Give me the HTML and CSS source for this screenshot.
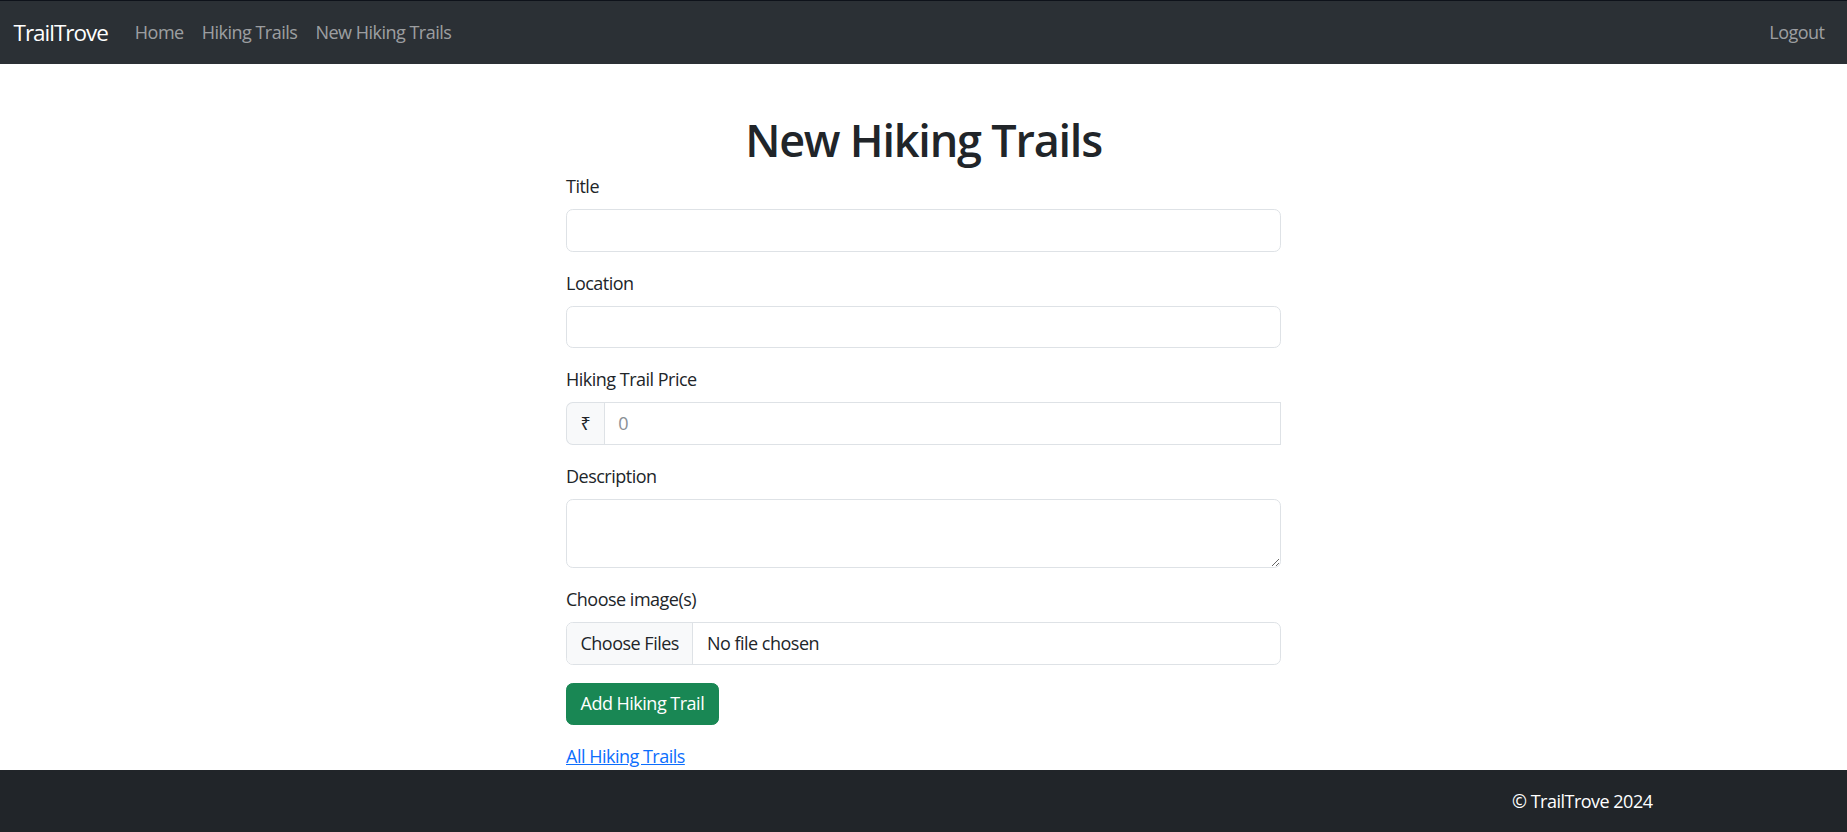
FILE: index.html
```html
<!DOCTYPE html>
<html lang="en">
<head>
  <meta charset="UTF-8">
  <title>TrailTrove</title>
  <link rel="stylesheet" href="styles.css">
</head>
<body>
  <nav class="navbar">
    <a class="brand" href="#">TrailTrove</a>
    <div class="nav-links">
      <a href="#">Home</a>
      <a href="#">Hiking Trails</a>
      <a href="#">New Hiking Trails</a>
    </div>
    <div class="nav-right">
      <a href="#">Logout</a>
    </div>
  </nav>

  <main class="main">
    <h1>New Hiking Trails</h1>
    <div class="form-wrap">
      <form class="trail-form">
        <div class="field">
          <label for="title">Title</label>
          <input type="text" id="title" class="control">
        </div>
        <div class="field">
          <label for="location">Location</label>
          <input type="text" id="location" class="control">
        </div>
        <div class="field">
          <label for="price">Hiking Trail Price</label>
          <div class="input-group">
            <span class="addon">₹</span>
            <input type="text" id="price" class="control" placeholder="0">
          </div>
        </div>
        <div class="field">
          <label for="description">Description</label>
          <textarea id="description" class="control"></textarea>
        </div>
        <div class="field">
          <label for="image">Choose image(s)</label>
          <input type="file" id="image" class="control file" multiple>
        </div>
        <div class="field">
          <button type="button" class="btn-add">Add Hiking Trail</button>
        </div>
      </form>
      <a class="back" href="#">All Hiking Trails</a>
    </div>
  </main>

  <footer class="footer">
    <div class="footer-inner">
      <span>&copy; TrailTrove 2024</span>
    </div>
  </footer>
</body>
</html>
```

FILE: styles.css
```css
html, body {
  margin: 0;
  padding: 0;
}

body {
  font-family: 'Segoe UI', 'Open Sans', sans-serif;
  font-size: 18px;
  line-height: 27px;
  color: #212529;
  background: #fff;
  letter-spacing: -0.028em;
}

a {
  text-decoration: none;
}

.navbar {
  display: flex;
  align-items: center;
  height: 63px;
  border-top: 1px solid #0e121a;
  background: #2b3035;
  padding: 0 13.5px;
}

.brand {
  color: #fff;
  font-size: 22.5px;
  line-height: 34px;
  margin-right: 18px;
  letter-spacing: -0.045em;
}

.nav-links {
  display: flex;
}

.nav-links a,
.nav-right a {
  color: rgba(255, 255, 255, 0.55);
  padding: 9px;
}

.nav-right {
  margin-left: auto;
}

.main {
  display: flex;
  flex-direction: column;
  align-items: center;
}

h1 {
  margin: 49px 0 6px;
  font-size: 45px;
  line-height: 54px;
  font-weight: 600;
  letter-spacing: -0.027em;
}

.form-wrap {
  width: 715px;
}

.field {
  margin-bottom: 18px;
}

label {
  display: block;
  margin-bottom: 9px;
}

.control {
  display: block;
  width: 100%;
  box-sizing: border-box;
  padding: 6.75px 13.5px;
  font: inherit;
  line-height: 27px;
  letter-spacing: inherit;
  color: #212529;
  border: 1px solid #dee2e6;
  border-radius: 6.75px;
  background: #fff;
  outline: none;
}

.control::placeholder {
  color: #8a9096;
}

textarea.control {
  height: 69.5px;
  resize: vertical;
}

.input-group {
  display: flex;
}

.addon {
  padding: 6.75px 13.5px;
  border: 1px solid #dee2e6;
  border-right: none;
  border-radius: 6.75px 0 0 6.75px;
  background: #f8f9fa;
  font-family: 'Noto Sans', sans-serif;
}

.input-group .control {
  border-radius: 0;
}

.file {
  padding: 0;
  overflow: hidden;
}

.file::file-selector-button {
  font: inherit;
  letter-spacing: inherit;
  color: #212529;
  background: #f8f9fa;
  border: none;
  border-right: 1px solid #dee2e6;
  padding: 6.75px 13.5px;
  margin: 0 13.5px 0 0;
  line-height: 27px;
}

.btn-add {
  font: inherit;
  letter-spacing: inherit;
  line-height: 27px;
  color: #fff;
  background: #198754;
  border: 1px solid #198754;
  border-radius: 6.75px;
  padding: 6.75px 13.5px;
}

.back {
  color: #0d6efd;
  text-decoration: underline;
}

.footer {
  background: #212529;
  color: #fff;
  padding: 18px 0;
}

.footer-inner {
  max-width: 1458px;
  margin: 0 auto;
  padding: 0 13.5px;
  text-align: right;
}
```
